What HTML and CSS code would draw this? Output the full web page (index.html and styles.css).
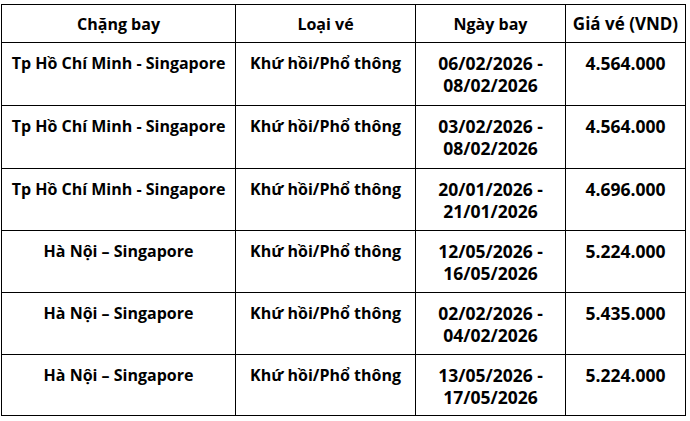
FILE: index.html
```html
<!DOCTYPE html>
<html lang="vi">
<head>
<meta charset="utf-8">
<link rel="stylesheet" href="styles.css">
</head>
<body>
<table class="fares">
  <colgroup>
    <col class="c1"><col class="c2"><col class="c3"><col class="c4">
  </colgroup>
  <thead>
    <tr class="head"><th>Chặng bay</th><th>Loại vé</th><th>Ngày bay</th><th class="h-price">Giá vé (VND)</th></tr>
  </thead>
  <tbody>
    <tr class="r63"><td>Tp Hồ Chí Minh - Singapore</td><td>Khứ hồi/Phổ thông</td><td class="num">06/02/2026 -<br>08/02/2026</td><td class="num">4.564.000</td></tr>
    <tr class="r63"><td>Tp Hồ Chí Minh - Singapore</td><td>Khứ hồi/Phổ thông</td><td class="num">03/02/2026 -<br>08/02/2026</td><td class="num">4.564.000</td></tr>
    <tr class="r62"><td>Tp Hồ Chí Minh - Singapore</td><td>Khứ hồi/Phổ thông</td><td class="num">20/01/2026 -<br>21/01/2026</td><td class="num">4.696.000</td></tr>
    <tr class="r62"><td>Hà Nội – Singapore</td><td>Khứ hồi/Phổ thông</td><td class="num">12/05/2026 -<br>16/05/2026</td><td class="num">5.224.000</td></tr>
    <tr class="r62"><td>Hà Nội – Singapore</td><td>Khứ hồi/Phổ thông</td><td class="num">02/02/2026 -<br>04/02/2026</td><td class="num">5.435.000</td></tr>
    <tr class="r61"><td>Hà Nội – Singapore</td><td>Khứ hồi/Phổ thông</td><td class="num">13/05/2026 -<br>17/05/2026</td><td class="num">5.224.000</td></tr>
  </tbody>
</table>
</body>
</html>
```
FILE: styles.css
```css
html, body {
  margin: 0;
  background: #ffffff;
}
body {
  padding: 4px 0 0 1px;
  font-family: "Open Sans", "Noto Sans", sans-serif;
  font-weight: 700;
  font-size: 16px;
  color: #000000;
}
.fares {
  border-collapse: collapse;
  table-layout: fixed;
  width: 685px;
}
.c1 { width: 234px; }
.c2 { width: 180px; }
.c3 { width: 150px; }
.c4 { width: 120px; }
.fares th, .fares td {
  border: 1px solid #000000;
  text-align: center;
  padding: 0;
  line-height: 22px;
  font-weight: 700;
}
.fares th {
  height: 37px;
  vertical-align: middle;
}
.fares .h-price {
  font-size: 17px;
}
.fares td {
  vertical-align: top;
  padding-top: 9px;
  box-sizing: border-box;
}
.fares .num {
  font-size: 17.5px;
}
.r63 td { height: 63px; }
.r62 td { height: 62px; }
.r61 td { height: 61px; }
```
